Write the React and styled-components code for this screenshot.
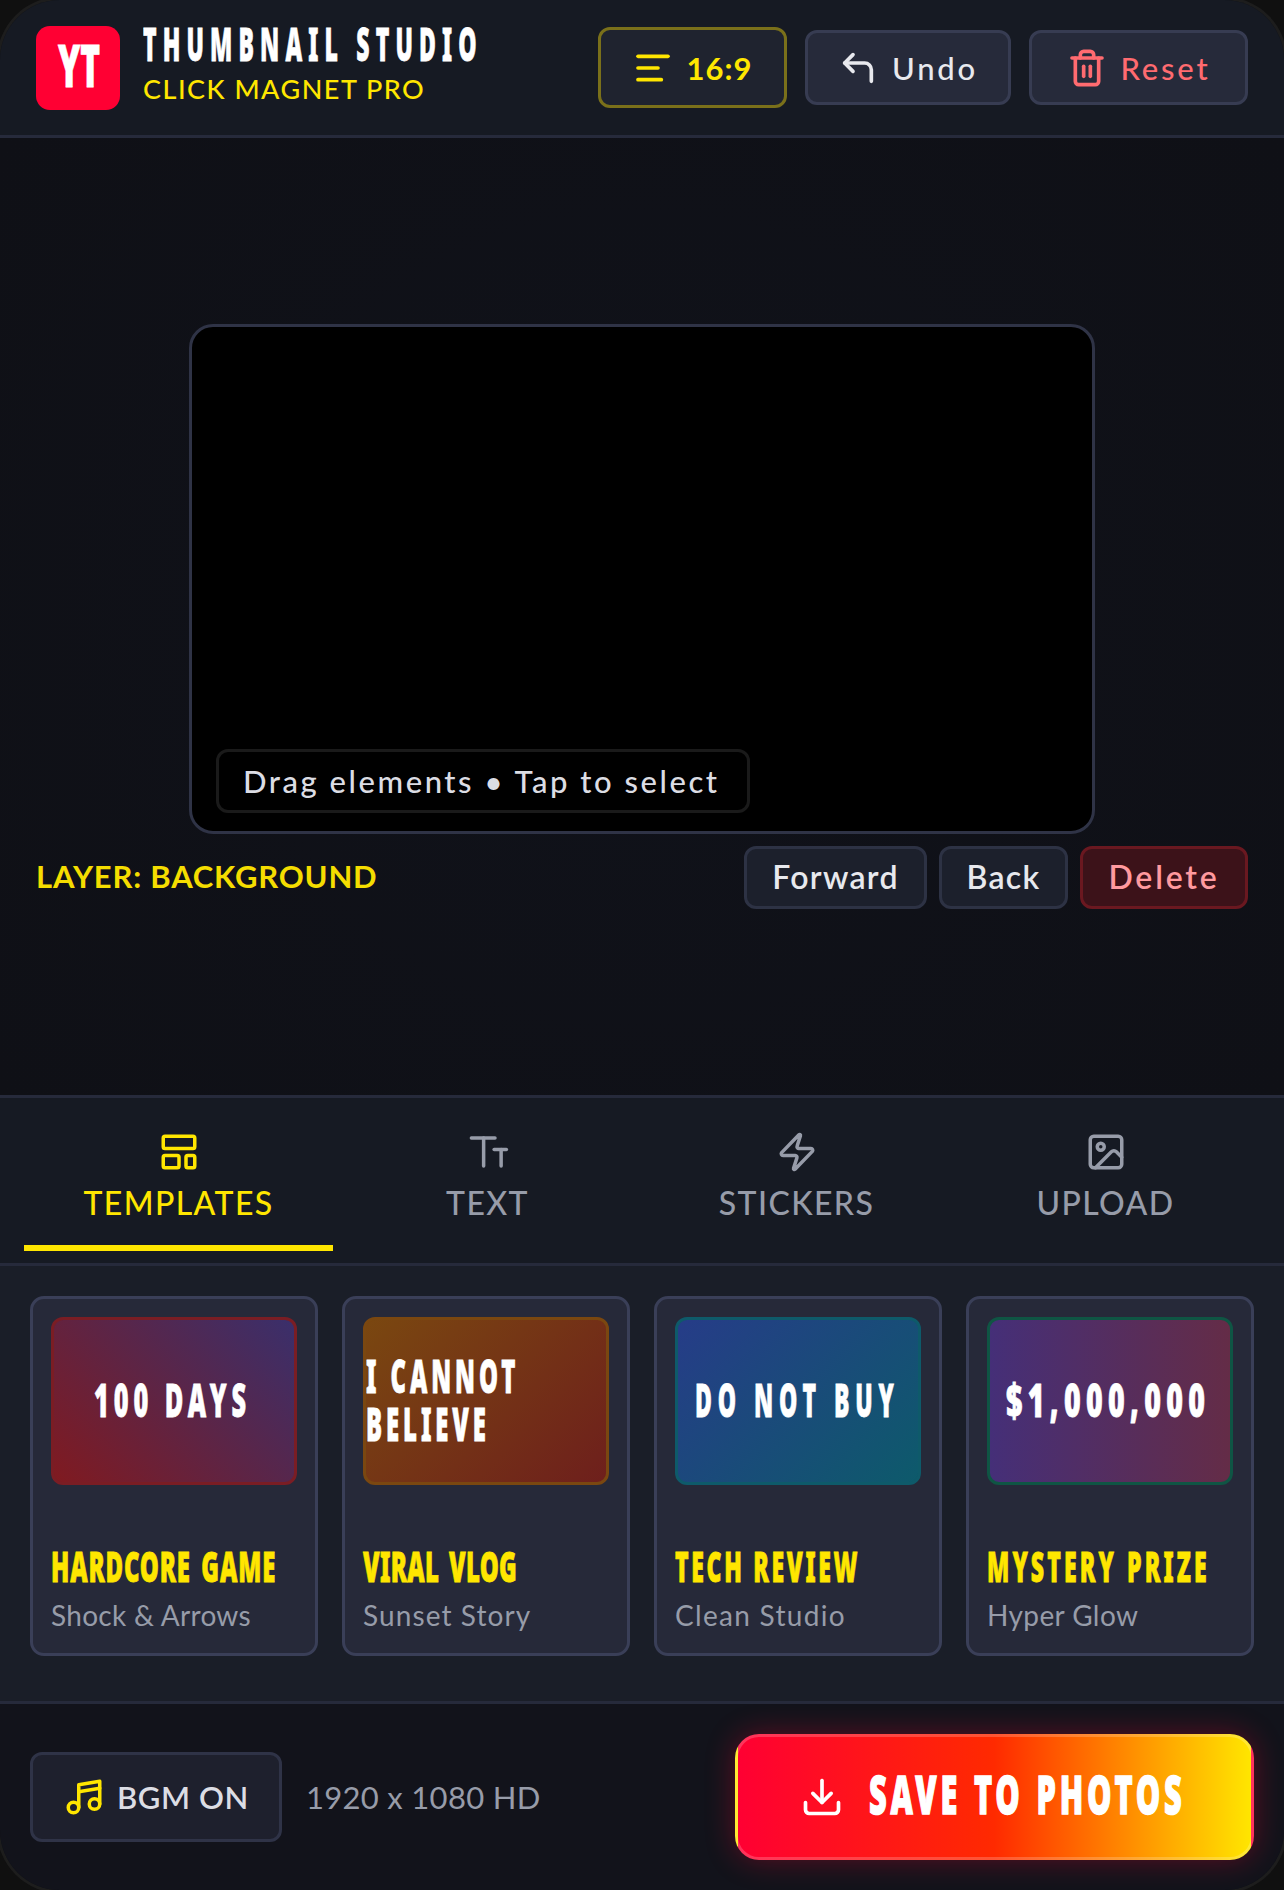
import React from "react";
import styled, { createGlobalStyle } from "styled-components";
import { CornerUpLeft, Trash2, AlignLeft, LayoutTemplate, Zap, Image as ImageIcon, Download } from "lucide-react";

const Global = createGlobalStyle`
  * { box-sizing: border-box; }
  html, body { margin: 0; padding: 0; background: #101010; }
  body { font-family: Lato, "Noto Sans", sans-serif; }
`;

const Frame = styled.div`
  width: 1284px; height: 1890px; border-radius: 60px; overflow: hidden;
  display: flex; flex-direction: column; background: #0f1117;
  box-shadow: 0 0 0 3px #1d1d1d;
`;

/* Heavy condensed poster face: Noto Sans Black narrowed horizontally. */
const Display = styled.span`
  display: block; flex: none; white-space: nowrap; font-family: "Noto Sans", sans-serif; font-weight: 900;
  line-height: 1; color: ${p => p.$color || "#fff"}; font-size: ${p => p.$size}px;
  width: ${p => p.$w}px; letter-spacing: ${p => p.$spacing || 0}px; word-spacing: ${p => p.$word || 0}px;
  margin-bottom: ${p => p.$lift || 0}px;
  -webkit-text-stroke: ${p => p.$stroke ?? 0.8}px ${p => p.$color || "#fff"};
  transform: scaleX(${p => p.$scale}); transform-origin: left center;
`;

const Header = styled.header`
  height: 138px; flex: none; display: flex; align-items: center; justify-content: space-between;
  padding: 0 36px; background: #161a23; border-bottom: 3px solid #262a3b;
`;
const Brand = styled.div`display: flex; align-items: center; gap: 23px;`;
const Logo = styled.div`
  width: 84px; height: 84px; border-radius: 14px; background: #ff0033;
  display: flex; align-items: center; justify-content: center;
`;
const BrandText = styled.div`display: flex; flex-direction: column; gap: 7px; margin-top: -11px;`;
const Tagline = styled.div`
  font-size: 27px; line-height: 32px; font-weight: 500; color: #ffe600; letter-spacing: 1.5px; white-space: nowrap;
`;
const Actions = styled.div`display: flex; align-items: center; gap: 18px;`;
const HeadBtn = styled.button`
  display: flex; align-items: center; justify-content: center; gap: ${p => p.$gap || 14}px;
  width: ${p => p.$w}px; height: ${p => p.$h || 75}px; padding: 0; border-radius: 12px;
  font-family: inherit; font-size: 31px; font-weight: ${p => p.$weight || 500};
  letter-spacing: ${p => p.$ls ?? 2.8}px; color: ${p => p.$color};
  background: ${p => p.$bg || "#262a3a"}; border: 3px solid ${p => p.$border || "#373c52"};
`;

const Main = styled.main`
  flex: 1; min-height: 0; display: flex; flex-direction: column; align-items: center; justify-content: center;
  padding: 0 36px; background: radial-gradient(circle at 50% 50%, #10121a 0%, #0f1016 100%);
`;
const Canvas = styled.div`
  position: relative; width: 906px; height: 510px; flex: none; background: #000;
  border: 3px solid #2f3346; border-radius: 24px;
`;
const Hint = styled.div`
  position: absolute; left: 24px; bottom: 18px; width: 534px; height: 64px; display: flex; align-items: center;
  padding-left: 24px; border: 3px solid #1a1a1a; border-radius: 12px;
  font-size: 31px; font-weight: 500; letter-spacing: 2.55px; color: #dcdde4; white-space: nowrap;
`;
const LayerRow = styled.div`
  width: 100%; margin-top: 12px; display: flex; align-items: center; justify-content: space-between;
`;
const LayerLabel = styled.div`font-size: 31px; font-weight: 700; color: #f5dd00; letter-spacing: 0.8px; margin-top: -3px;`;
const LayerActions = styled.div`display: flex; gap: 12px;`;
const LayerBtn = styled.button`
  width: ${p => p.$w}px; height: 63px; padding: 0 0 2px; border-radius: 12px; font-family: inherit;
  font-size: 32px; font-weight: 600; letter-spacing: ${p => p.$ls || 1.3}px;
  color: ${p => p.$danger ? "#ff9a9f" : "#e8e9ee"};
  background: ${p => p.$danger ? "#3c1219" : "#1c202c"};
  border: 3px solid ${p => p.$danger ? "#6a1820" : "#2d3244"};
`;

const Tabs = styled.nav`
  height: 171px; flex: none; display: grid; grid-template-columns: repeat(4, minmax(0, 1fr)); padding: 0 24px;
  background: #161a23; border-top: 3px solid #262a3b; border-bottom: 3px solid #262a3b;
`;
const Tab = styled.div`
  display: flex; flex-direction: column; align-items: center; padding-top: 33px; height: 153px;
  color: ${p => p.$active ? "#ffe600" : "#979ca9"};
  border-bottom: 6px solid ${p => p.$active ? "#ffe600" : "transparent"};
`;
const TabLabel = styled.span`
  margin-top: 13px; font-size: 32px; line-height: 34px; font-weight: 500; letter-spacing: 1.4px;
`;

const Panel = styled.section`
  height: 435px; flex: none; display: grid; grid-template-columns: repeat(4, minmax(0, 1fr)); gap: 24px;
  padding: 30px 30px 0; background: #1a1e28;
`;
const Card = styled.article`
  display: flex; flex-direction: column; padding: 18px; height: 360px; min-width: 0; background: #262939;
  border: 3px solid #3a3f58; border-radius: 14px;
`;
const Thumb = styled.div`
  height: 168px; flex: none; display: flex; align-items: center; justify-content: ${p => p.$left ? "flex-start" : "center"};
  border-radius: 12px; background: ${p => p.$bg};
  border: 3px solid ${p => p.$border};
`;
const ThumbLines = styled.div`display: flex; flex-direction: column; gap: 2px; margin-bottom: 4px;`;
const CardTitle = styled.div`margin-top: 64px; height: 34px; display: flex; align-items: center;`;
const CardSub = styled.div`
  margin-top: 15px; font-size: 28px; line-height: 34px; font-weight: 400; color: #979ca9;
  letter-spacing: ${p => p.$ls}px; white-space: nowrap;
`;

const Footer = styled.footer`
  height: 189px; flex: none; display: flex; align-items: center; justify-content: space-between;
  padding: 0 30px; background: #12131b; border-top: 3px solid #262a3b;
`;
const FootLeft = styled.div`display: flex; align-items: center; gap: 24px;`;
const Bgm = styled.div`
  width: 252px; height: 90px; display: flex; align-items: center; justify-content: center; gap: 12px;
  background: #1e202d; border: 3px solid #2f3347; border-radius: 12px;
  font-size: 31px; font-weight: 600; color: #dcdde4; letter-spacing: 0.6px;
`;
const Res = styled.div`font-size: 31px; font-weight: 400; color: #979ca9; letter-spacing: 0.3px;`;
const Save = styled.button`
  width: 519px; height: 126px; padding: 0; display: flex; align-items: center; justify-content: center; gap: 25px;
  border-radius: 24px; border: 3px solid rgba(255,255,255,.2);
  background: linear-gradient(90deg, #ff0033 0%, #ff2a00 50%, #ffe600 100%);
  box-shadow: 0 0 30px rgba(255,0,51,.32);
`;

const TextIcon = () => (
  <svg width="42" height="42" viewBox="0 0 24 24" fill="none" stroke="currentColor" strokeWidth="2" strokeLinecap="round" strokeLinejoin="round">
    <path d="M2.5 4H16" /><path d="M9.5 4v16" /><path d="M15.5 10.5h7" /><path d="M19.5 10.5V20" />
  </svg>
);
const NotesIcon = () => (
  <svg width="42" height="42" viewBox="0 0 24 24" fill="none" stroke="#ffe600" strokeWidth="2" strokeLinecap="round" strokeLinejoin="round">
    <path d="M9 18V5l12-2v13" /><path d="M9 9l12-2" /><circle cx="6" cy="18" r="3" /><circle cx="18" cy="16" r="3" />
  </svg>
);

const templates = [
  { title: "HARDCORE GAME", w: 226, scale: 0.57, sp: 1.5, word: 6, sub: "Shock & Arrows", subLs: 0.3, bg: "linear-gradient(45deg, #801a20, #3a2f6b)", border: "#7a1d24", text: "100 DAYS", tw: 160, ts: 0.55, tsp: 9 },
  { title: "VIRAL VLOG", w: 150, scale: 0.57, sp: 0.5, word: 6, sub: "Sunset Story", subLs: 1.1, bg: "linear-gradient(135deg, #7a4710, #6e1f1c)", border: "#7a4710", lines: ["I CANNOT", "BELIEVE"], tw: 156, ts: 0.52, tsp: 7.5 },
  { title: "TECH REVIEW", w: 186, scale: 0.55, sp: 4.8, word: 0, sub: "Clean Studio", subLs: 1.3, bg: "linear-gradient(135deg, #263c88, #0d5a6b)", border: "#0e5a6a", text: "DO NOT BUY", tw: 206, ts: 0.5, tsp: 11.8 },
  { title: "MYSTERY PRIZE", w: 226, scale: 0.55, sp: 5.6, word: 2, sub: "Hyper Glow", subLs: 0.4, bg: "linear-gradient(90deg, #452f78, #642c47)", border: "#0f5544", text: "$1,000,000", tw: 208, ts: 0.62, tsp: 8.6 },
];

const tabs = [
  { label: "TEMPLATES", icon: <LayoutTemplate size={42} />, active: true },
  { label: "TEXT", icon: <TextIcon /> },
  { label: "STICKERS", icon: <Zap size={42} /> },
  { label: "UPLOAD", icon: <ImageIcon size={42} /> },
];

export default function App() {
  return (
    <>
      <Global />
      <Frame>
        <Header>
          <Brand>
            <Logo><Display $size={58} $w={40} $scale={0.58} $lift={6}>YT</Display></Logo>
            <BrandText>
              <Display $size={46} $w={340} $spacing={12.3} $scale={0.5}>THUMBNAIL STUDIO</Display>
              <Tagline>CLICK MAGNET PRO</Tagline>
            </BrandText>
          </Brand>
          <Actions>
            <HeadBtn $w={189} $h={81} $color="#ffe600" $bg="#1f232f" $border="#7a701a" $weight={700} $ls={1}><AlignLeft size={40} strokeWidth={2.2} />16:9</HeadBtn>
            <HeadBtn $w={206} $color="#e8e9ee"><CornerUpLeft size={40} strokeWidth={2.2} />Undo</HeadBtn>
            <HeadBtn $w={219} $color="#ff6b70"><Trash2 size={40} strokeWidth={2.2} />Reset</HeadBtn>
          </Actions>
        </Header>
        <Main>
          <Canvas>
            <Hint>Drag elements • Tap to select</Hint>
          </Canvas>
          <LayerRow>
            <LayerLabel>LAYER: BACKGROUND</LayerLabel>
            <LayerActions>
              <LayerBtn $w={183}>Forward</LayerBtn>
              <LayerBtn $w={129}>Back</LayerBtn>
              <LayerBtn $w={168} $danger $ls={2.8}>Delete</LayerBtn>
            </LayerActions>
          </LayerRow>
        </Main>
        <Tabs>
          {tabs.map(t => (
            <Tab key={t.label} $active={t.active}>
              {t.icon}
              <TabLabel>{t.label}</TabLabel>
            </Tab>
          ))}
        </Tabs>
        <Panel>
          {templates.map(t => (
            <Card key={t.title}>
              <Thumb $bg={t.bg} $border={t.border} $left={!!t.lines}>
                {t.lines ? (
                  <ThumbLines>
                    {t.lines.map(l => <Display key={l} $size={46} $w={t.tw} $spacing={t.tsp} $scale={t.ts}>{l}</Display>)}
                  </ThumbLines>
                ) : (
                  <Display $size={46} $w={t.tw} $spacing={t.tsp} $scale={t.ts} $lift={4}>{t.text}</Display>
                )}
              </Thumb>
              <CardTitle>
                <Display $color="#ffe600" $size={42} $w={t.w} $spacing={t.sp} $word={t.word} $scale={t.scale}>{t.title}</Display>
              </CardTitle>
              <CardSub $ls={t.subLs}>{t.sub}</CardSub>
            </Card>
          ))}
        </Panel>
        <Footer>
          <FootLeft>
            <Bgm><NotesIcon />BGM ON</Bgm>
            <Res>1920 x 1080 HD</Res>
          </FootLeft>
          <Save>
            <Download size={44} color="#fff" />
            <Display $size={53} $w={320} $spacing={6.5} $word={2} $scale={0.58} $stroke={1.4} $lift={8}>SAVE TO PHOTOS</Display>
          </Save>
        </Footer>
      </Frame>
    </>
  );
}
